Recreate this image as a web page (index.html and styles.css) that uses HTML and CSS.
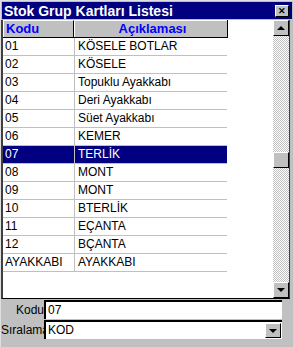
FILE: index.html
```html
<!DOCTYPE html>
<html lang="tr">
<head>
<meta charset="UTF-8">
<title>Stok Grup Kartları Listesi</title>
<link rel="stylesheet" href="styles.css">
</head>
<body>
<div class="window">
  <div class="titlebar">
    <span class="title">Stok Grup Kartları Listesi</span>
    <span class="close">&#x2715;</span>
  </div>
  <div class="gridbox">
    <div class="grid">
      <div class="row head">
        <div class="cell code">Kodu</div>
        <div class="cell desc">Açıklaması</div>
      </div>
      <div class="row"><div class="cell code">01</div><div class="cell desc">KÖSELE BOTLAR</div></div>
      <div class="row"><div class="cell code">02</div><div class="cell desc">KÖSELE</div></div>
      <div class="row"><div class="cell code">03</div><div class="cell desc">Topuklu Ayakkabı</div></div>
      <div class="row"><div class="cell code">04</div><div class="cell desc">Deri Ayakkabı</div></div>
      <div class="row"><div class="cell code">05</div><div class="cell desc">Süet Ayakkabı</div></div>
      <div class="row"><div class="cell code">06</div><div class="cell desc">KEMER</div></div>
      <div class="row selected"><div class="cell code">07</div><div class="cell desc">TERLİK</div></div>
      <div class="row"><div class="cell code">08</div><div class="cell desc">MONT</div></div>
      <div class="row"><div class="cell code">09</div><div class="cell desc">MONT</div></div>
      <div class="row"><div class="cell code">10</div><div class="cell desc">BTERLİK</div></div>
      <div class="row"><div class="cell code">11</div><div class="cell desc">EÇANTA</div></div>
      <div class="row"><div class="cell code">12</div><div class="cell desc">BÇANTA</div></div>
      <div class="row"><div class="cell code">AYAKKABI</div><div class="cell desc">AYAKKABI</div></div>
    </div>
    <div class="scrollbar">
      <div class="sbtn"><span class="arrow up"></span></div>
      <div class="track">
        <div class="thumb"></div>
      </div>
      <div class="sbtn"><span class="arrow down"></span></div>
    </div>
  </div>
  <div class="field">
    <label class="flabel">Kodu</label>
    <div class="input">07</div>
  </div>
  <div class="field">
    <label class="flabel">Sıralama</label>
    <div class="input combo">
      <span>KOD</span>
      <span class="dropbtn"><span class="arrow down"></span></span>
    </div>
  </div>
</div>
</body>
</html>
```

FILE: styles.css
```css
body {
  margin: 0;
  font-family: "Liberation Sans", Arial, sans-serif;
  font-size: 12px;
  color: #000;
  background: #c0c0c0;
}
.window {
  width: 293px;
  height: 347px;
  box-sizing: border-box;
  background: #c0c0c0;
  border-top: 1px solid #dfdfdf;
  border-left: 1px solid #dfdfdf;
  display: flex;
  flex-direction: column;
}
.titlebar {
  height: 17px;
  margin: 1px 1px 1px 1px;
  background: #000080;
  color: #fff;
  display: flex;
  align-items: center;
  justify-content: space-between;
  padding: 0 3px 0 2px;
}
.title {
  font-weight: bold;
  font-size: 14px;
}
.close {
  width: 12px;
  height: 10px;
  background: #c0c0c0;
  color: #000;
  font-size: 9px;
  font-weight: bold;
  line-height: 10px;
  text-align: center;
  border: 1px solid;
  border-color: #fff #000 #000 #fff;
}
.gridbox {
  display: flex;
  height: 278px;
  background: #fff;
  border-left: 2px solid #404040;
  border-bottom: 1px solid #000;
  margin-right: 3px;
}
.grid {
  flex: 1;
}
.row {
  display: flex;
  height: 17px;
  border-bottom: 1px solid #c0c0c0;
  width: 224px;
}
.cell {
  line-height: 17px;
  padding-left: 2px;
  white-space: nowrap;
  overflow: hidden;
}
.code {
  width: 69px;
  border-right: 1px solid #c0c0c0;
}
.desc {
  flex: 1;
  padding-left: 3px;
}
.head {
  background: #c0c0c0;
  border-bottom: 1px solid #000;
  border-right: 1px solid #000;
  color: #0000ff;
  font-weight: bold;
  font-size: 13px;
}
.head .cell {
  border-top: 1px solid #fff;
  border-left: 1px solid #fff;
  line-height: 16px;
}
.head .code {
  border-right: 1px solid #000;
  width: 67px;
}
.head .desc {
  text-align: center;
}
.selected {
  background: #000080;
  color: #fff;
}
.scrollbar {
  width: 16px;
  display: flex;
  flex-direction: column;
  border-right: 1px solid #404040;
}
.sbtn {
  height: 14px;
  background: #c0c0c0;
  border: 1px solid;
  border-color: #fff #000 #000 #fff;
  display: flex;
  align-items: center;
  justify-content: center;
}
.track {
  flex: 1;
  background: repeating-conic-gradient(#c0c0c0 0 25%, #fff 0 50%) 0 0 / 2px 2px;
  padding-top: 116px;
}
.thumb {
  height: 14px;
  background: #c0c0c0;
  border: 1px solid;
  border-color: #fff #000 #000 #fff;
}
.arrow {
  width: 0;
  height: 0;
  border-left: 4px solid transparent;
  border-right: 4px solid transparent;
}
.arrow.up {
  border-bottom: 4px solid #000;
}
.arrow.down {
  border-top: 4px solid #000;
}
.field {
  display: flex;
  align-items: center;
  height: 19px;
  margin-top: 1px;
}
.flabel {
  width: 43px;
  text-align: right;
  font-size: 12px;
}
.input {
  width: 234px;
  height: 17px;
  background: #fff;
  border-top: 2px solid #000;
  border-left: 2px solid #000;
  box-sizing: content-box;
  padding-left: 2px;
  line-height: 17px;
}
.combo {
  display: flex;
  justify-content: space-between;
  align-items: center;
}
.dropbtn {
  width: 14px;
  height: 13px;
  background: #c0c0c0;
  border: 1px solid;
  border-color: #fff #000 #000 #fff;
  display: flex;
  align-items: center;
  justify-content: center;
  margin-right: 1px;
}
```
